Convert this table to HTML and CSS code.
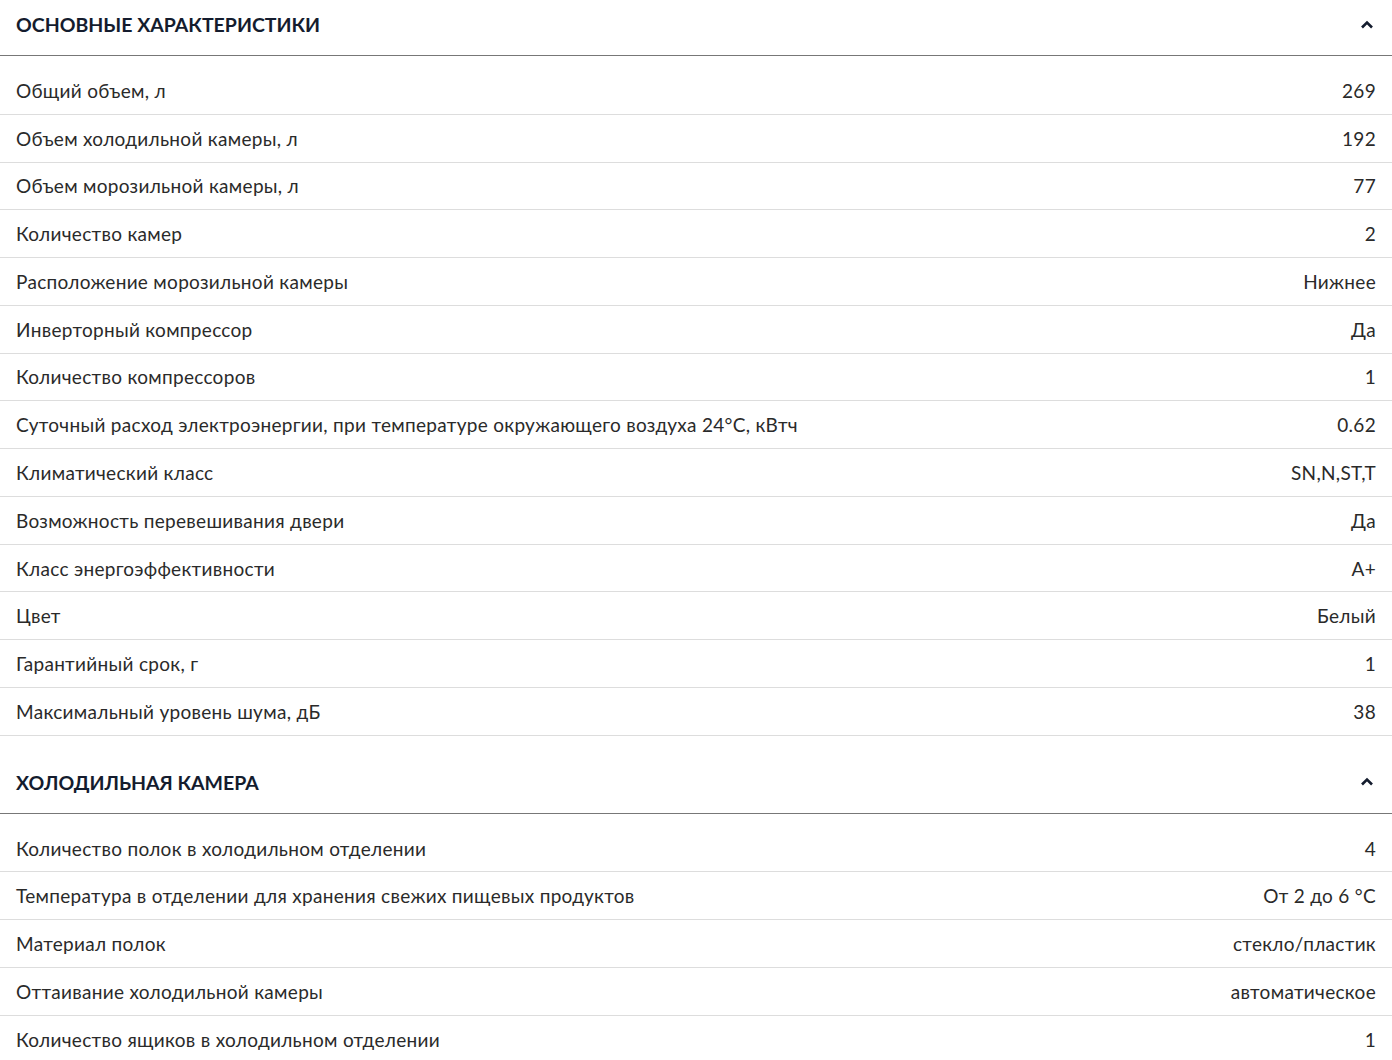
FILE: index.html
```html
<!DOCTYPE html>
<html lang="ru">
<head>
    <meta charset="UTF-8">
    <title>Характеристики</title>
    <link rel="stylesheet" href="styles.css">
</head>
<body>
    <section class="spec-group">
        <header class="spec-header">
            <h2>Основные характеристики</h2>
            <svg class="chevron" width="14" height="10" viewBox="0 0 14 10"><path d="M2 7.5 L7 2.5 L12 7.5" fill="none" stroke="#141c2e" stroke-width="2.6"/></svg>
        </header>
        <div class="spec-list">
            <div class="spec-row"><span>Общий объем, л</span><span>269</span></div>
            <div class="spec-row"><span>Объем холодильной камеры, л</span><span>192</span></div>
            <div class="spec-row"><span>Объем морозильной камеры, л</span><span>77</span></div>
            <div class="spec-row"><span>Количество камер</span><span>2</span></div>
            <div class="spec-row"><span>Расположение морозильной камеры</span><span>Нижнее</span></div>
            <div class="spec-row"><span>Инверторный компрессор</span><span>Да</span></div>
            <div class="spec-row"><span>Количество компрессоров</span><span>1</span></div>
            <div class="spec-row"><span>Суточный расход электроэнергии, при температуре окружающего воздуха 24°C, кВтч</span><span>0.62</span></div>
            <div class="spec-row"><span>Климатический класс</span><span>SN,N,ST,T</span></div>
            <div class="spec-row"><span>Возможность перевешивания двери</span><span>Да</span></div>
            <div class="spec-row"><span>Класс энергоэффективности</span><span>A+</span></div>
            <div class="spec-row"><span>Цвет</span><span>Белый</span></div>
            <div class="spec-row"><span>Гарантийный срок, г</span><span>1</span></div>
            <div class="spec-row"><span>Максимальный уровень шума, дБ</span><span>38</span></div>
        </div>
    </section>

    <section class="spec-group">
        <header class="spec-header">
            <h2>Холодильная камера</h2>
            <svg class="chevron" width="14" height="10" viewBox="0 0 14 10"><path d="M2 7.5 L7 2.5 L12 7.5" fill="none" stroke="#141c2e" stroke-width="2.6"/></svg>
        </header>
        <div class="spec-list">
            <div class="spec-row"><span>Количество полок в холодильном отделении</span><span>4</span></div>
            <div class="spec-row"><span>Температура в отделении для хранения свежих пищевых продуктов</span><span>От 2 до 6 °C</span></div>
            <div class="spec-row"><span>Материал полок</span><span>стекло/пластик</span></div>
            <div class="spec-row"><span>Оттаивание холодильной камеры</span><span>автоматическое</span></div>
            <div class="spec-row"><span>Количество ящиков в холодильном отделении</span><span>1</span></div>
        </div>
    </section>
</body>
</html>
```

FILE: styles.css
```css
* {
    margin: 0;
    padding: 0;
    box-sizing: border-box;
}

body {
    font-family: 'Lato', 'DejaVu Sans', sans-serif;
    color: #2a2a2a;
    background: #fff;
}

.spec-group + .spec-group {
    margin-top: 22px;
}

.spec-header {
    display: flex;
    justify-content: space-between;
    align-items: center;
    height: 56px;
    padding: 0 18px 6px 16px;
    border-bottom: 1px solid #777;
}

.spec-header h2 {
    font-size: 19.5px;
    font-weight: 700;
    text-transform: uppercase;
    color: #141c2e;
}

.chevron {
    display: block;
}

.spec-list {
    padding-top: 11px;
}

.spec-row {
    display: flex;
    justify-content: space-between;
    align-items: center;
    height: 47.77px;
    padding: 0 16px;
    border-bottom: 1px solid #ddd;
    font-size: 19px;
    letter-spacing: 0.3px;
}
```
